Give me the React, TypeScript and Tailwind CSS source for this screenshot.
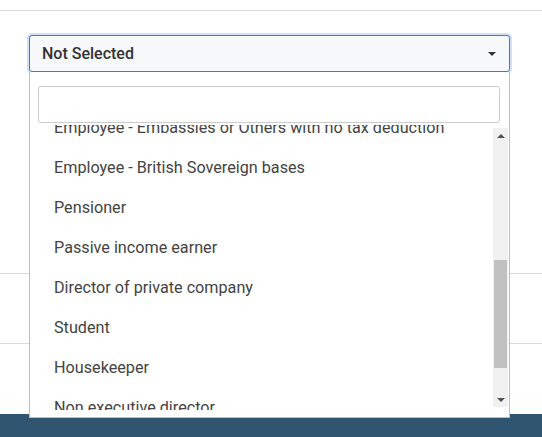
const options = [
  'Employee - Embassies or Others with no tax deduction',
  'Employee - British Sovereign bases',
  'Pensioner',
  'Passive income earner',
  'Director of private company',
  'Student',
  'Housekeeper',
  'Non executive director',
];

function ScrollBar() {
  return (
    <div className="flex w-[15px] flex-col bg-[#f1f1f1]">
      <div className="flex h-[15px] items-center justify-center">
        <div className="h-0 w-0 border-x-[4px] border-b-[4px] border-x-transparent border-b-[#505050]" />
      </div>
      <div className="flex flex-1 flex-col">
        <div className="h-[117px]" />
        <div className="mx-[1px] h-[108px] bg-[#c1c1c1]" />
      </div>
      <div className="flex h-[15px] items-center justify-center">
        <div className="h-0 w-0 border-x-[4px] border-t-[4px] border-x-transparent border-t-[#505050]" />
      </div>
    </div>
  );
}

export default function App() {
  return (
    <div className="h-[437px] overflow-hidden bg-white font-['Roboto',sans-serif]">
      <div className="h-[11px] border-b border-[#d9d9d9]" />
      <div className="pl-[29px] pr-[32px] pt-[24px]">
        <div className="relative">
          <div className="flex h-[37px] items-center justify-between rounded-[3px] border border-[#3f7ac4] bg-[#f7f8fa] pl-[12px] pr-[13px] shadow-[0_0_0_2px_rgba(120,170,230,0.35)]">
            <span className="text-[16px] font-medium text-[#333]">Not Selected</span>
            <div className="h-0 w-0 border-x-[4px] border-t-[4px] border-x-transparent border-t-[#333]" />
          </div>
          <div className="absolute left-0 right-0 top-full z-10 border border-t-0 border-[#bdbdbd] bg-white pb-[7px]">
            <div className="pl-[8px] pr-[9px] pt-[14px]">
              <div className="h-[37px] rounded-[3px] border border-[#ccc] bg-white" />
            </div>
            <div className="mt-[2px] flex h-[285px] pr-[1px]">
              <div className="flex-1 overflow-hidden">
                <div className="-mt-[17px]">
                  {options.map((o) => (
                    <div key={o} className="flex h-[40px] items-center pl-[24px] text-[16.2px] text-[#444]">
                      {o}
                    </div>
                  ))}
                </div>
              </div>
              <div className="flex py-[3px]">
                <ScrollBar />
              </div>
            </div>
          </div>
        </div>
      </div>
      <div className="mt-[201px] h-[71px] border-y border-[#d9d9d9]" />
      <div className="mt-[70px] h-[30px] bg-[#2f5570]" />
    </div>
  );
}
